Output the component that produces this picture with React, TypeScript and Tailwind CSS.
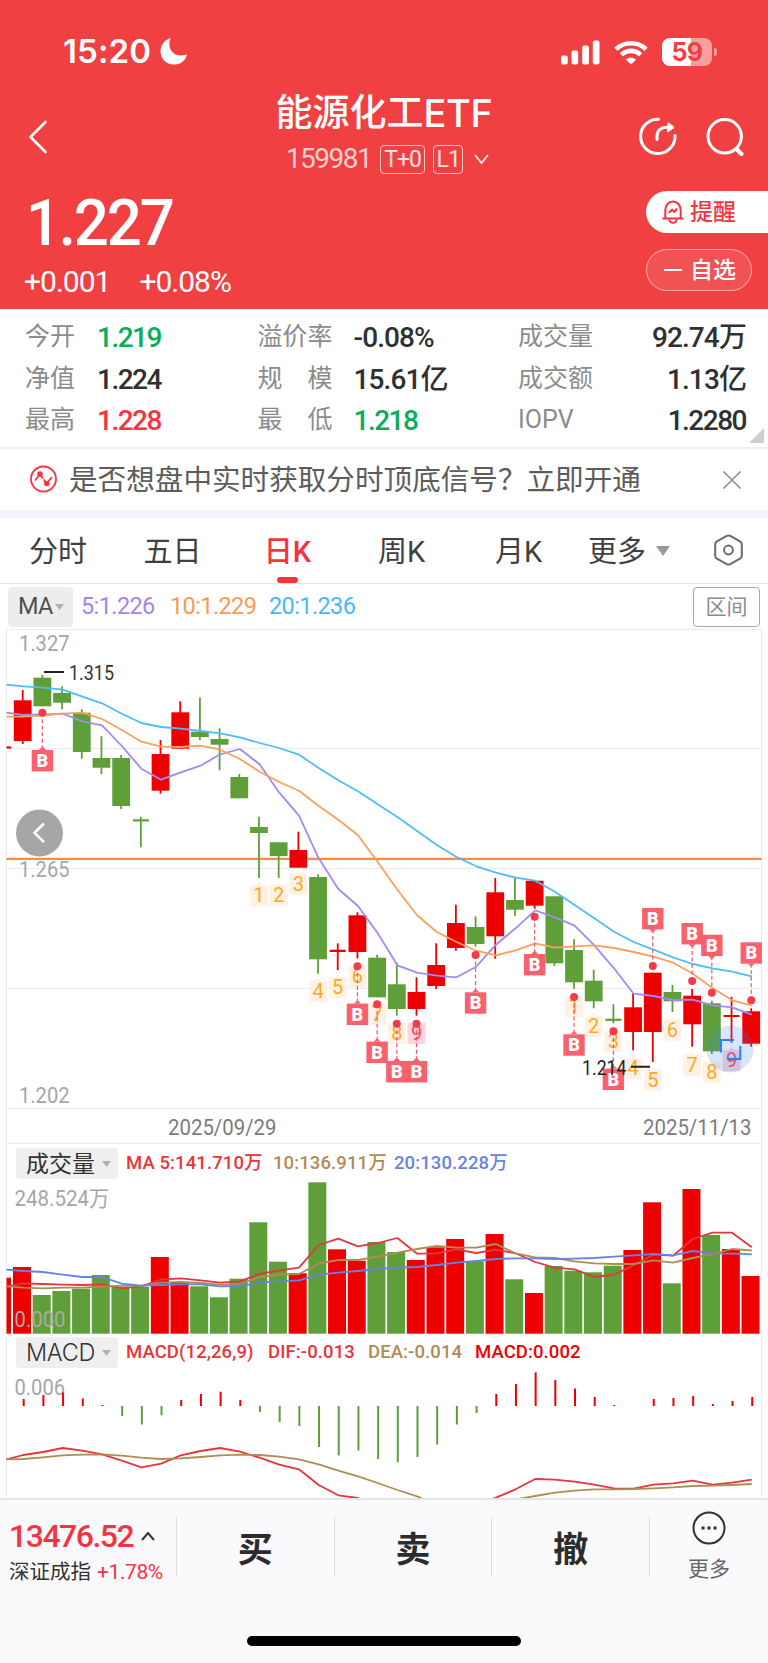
import clsx from "clsx";
import { ReactNode } from "react";

type Side = "r" | "g";

const RED = "#ee0000";
const GREEN = "#5f9f3a";
const STEP = 19.69;
const cx = (i: number) => 22.7 + i * STEP;

// side, body top, body bottom, wick high, wick low
const candles: [Side, number, number, number, number][] = [
  ["r", 700.3, 741, 690, 744],
  ["g", 677.7, 706.3, 675, 706.3],
  ["g", 693, 702.7, 686.3, 709.3],
  ["g", 712.7, 752, 709.3, 758.7],
  ["g", 758, 767.7, 736.3, 774],
  ["g", 758, 806, 755, 809],
  ["g", 819.3, 821.5, 816.7, 847.3],
  ["r", 754, 790.7, 740, 793.7],
  ["r", 712.3, 748.7, 701.3, 748.7],
  ["g", 731.7, 737, 697.7, 740],
  ["g", 739, 744.7, 728.3, 770.3],
  ["g", 777, 798.3, 774, 798.3],
  ["g", 827, 833, 816.7, 878],
  ["g", 842.3, 856, 842.3, 878],
  ["r", 850, 867.7, 831.7, 867.7],
  ["g", 877, 959.3, 874.3, 973.7],
  ["r", 949.7, 952, 943.3, 970],
  ["r", 915.3, 952, 912.3, 958.3],
  ["g", 957.7, 997.3, 954.7, 997.3],
  ["g", 984.3, 1009, 962.7, 1015.7],
  ["r", 992, 1009, 977.3, 1015.7],
  ["r", 965, 986, 943.3, 989],
  ["r", 923, 948, 904.7, 950.7],
  ["g", 927, 944, 916.3, 946.7],
  ["r", 892.3, 936.3, 878, 958.7],
  ["g", 900, 909.7, 878, 916],
  ["r", 880.7, 905.7, 880, 908.7],
  ["g", 896.3, 963.3, 896.3, 966],
  ["g", 950, 982.3, 939.3, 988.7],
  ["g", 980.7, 1001.3, 969.7, 1008.3],
  ["g", 1018.7, 1020.9, 1004.3, 1023.3],
  ["r", 1007.3, 1032, 993.3, 1050.3],
  ["r", 972.7, 1032, 972.7, 1062],
  ["g", 992, 1001.3, 985, 1012],
  ["r", 995.7, 1024.3, 989, 1046.7],
  ["g", 1003.3, 1051.3, 1000.7, 1054],
  ["r", 1015, 1017, 996.7, 1042.7],
  ["r", 1011.3, 1043.7, 1008.3, 1046.7],
];

const ma5 = [712.7, 715, 714.3, 713.7, 721.3, 725.3, 746, 768.7, 779.7, 772.3, 765.7, 754.3, 749, 764.3, 792.7, 815.7, 858.3, 889, 906, 933.3, 965.3, 972.7, 975.7, 977.3, 966.7, 944.7, 928.3, 910.3, 917.3, 925.7, 945.3, 968.3, 993.7, 996, 1000, 999.7, 1005.3, 1007.3, 1014.7];
const ma10 = [716.7, 716.7, 715.7, 713.7, 712.7, 719, 730, 741.7, 746.7, 747, 745.7, 749.7, 759, 771.7, 782, 790.7, 806, 819.7, 835.3, 862, 889.7, 915.3, 932, 942, 950.7, 955.3, 950.3, 943.3, 947.7, 946.3, 945.3, 948, 952, 956.7, 962.7, 973.7, 988, 1000.3, 1005.7];
const ma20 = [684.7, 686.3, 687.7, 689.7, 696.7, 703.3, 713.7, 723, 727, 728.7, 731, 733.3, 737.3, 743, 748, 754.7, 768, 780.3, 791.3, 804.3, 817, 831, 845, 857, 866.3, 872.7, 877.7, 880.7, 891.7, 905, 918.3, 931.7, 942, 949.7, 957.3, 964, 968.3, 971.7, 976.3];

// index, dot y, tag hangs below (1) or sits above (-1)
const signals: [number, number, 1 | -1][] = [
  [1, 712.7, 1],
  [17, 966.3, 1],
  [18, 1004.3, 1],
  [19, 1023.7, 1],
  [20, 1023.7, 1],
  [23, 955, 1],
  [26, 916.7, 1],
  [28, 997, 1],
  [30, 1031.3, 1],
  [32, 966, -1],
  [34, 981, -1],
  [35, 992.7, -1],
  [37, 1000.3, -1],
];

// index, tile top, digit
const counts: [number, number, number][] = [
  [12, 885, 1], [13, 885, 2], [14, 873.3, 3], [15, 980.7, 4], [16, 977, 5],
  [17, 966, 6], [18, 1003.5, 7], [19, 1022.7, 8], [20, 1022.7, 9],
  [28, 996, 1], [29, 1015.7, 2], [30, 1031, 3], [31, 1057.7, 4], [32, 1069.5, 5],
  [33, 1019.7, 6], [34, 1054.5, 7], [35, 1061.7, 8], [36, 1050, 9],
];

const volumes: [Side, number][] = [
  ["r", 1267], ["g", 1295], ["g", 1291], ["g", 1288.7], ["g", 1275], ["g", 1287], ["g", 1287],
  ["r", 1257], ["r", 1282], ["g", 1286.3], ["g", 1297.3], ["g", 1278.7], ["g", 1222.3], ["g", 1261.7],
  ["r", 1273.3], ["g", 1182.3], ["r", 1249.3], ["r", 1260.7], ["g", 1242], ["g", 1252], ["r", 1260],
  ["r", 1247.3], ["r", 1239], ["g", 1261.3], ["r", 1234], ["g", 1279.3], ["r", 1293], ["g", 1266],
  ["g", 1270.7], ["g", 1272.3], ["g", 1265.7], ["r", 1250], ["r", 1202.3], ["g", 1283.3], ["r", 1189],
  ["g", 1235], ["r", 1249], ["r", 1276],
];
const vol5 = [1286.7, 1283.3, 1284, 1284.7, 1285, 1284.3, 1288.3, 1286.3, 1279.7, 1278.3, 1280.3, 1282.7, 1281.3, 1274, 1270.3, 1267.7, 1245, 1238.7, 1246.3, 1243, 1238, 1253.7, 1253.3, 1249.3, 1253, 1249.7, 1253.3, 1262, 1267.7, 1269.3, 1277, 1274.7, 1265.3, 1254.7, 1255.7, 1239, 1232.7, 1232.7, 1247.3];
const vol10 = [1286.3, 1287.7, 1288.3, 1287.7, 1287.7, 1286.7, 1285.7, 1286, 1282.7, 1282, 1283, 1284.7, 1284, 1277, 1274.7, 1274, 1263.7, 1260, 1260, 1256.7, 1252.7, 1249, 1246, 1247.7, 1247.7, 1244, 1253.3, 1257.3, 1258, 1261.3, 1263.3, 1264, 1264, 1260.3, 1262.7, 1258, 1254, 1249, 1250.3];
const vol20 = [1269.7, 1271, 1272, 1274.7, 1277, 1277, 1283.7, 1285.7, 1285, 1284.3, 1284.3, 1286.3, 1286, 1282.7, 1281.3, 1280.3, 1274.7, 1272.7, 1271, 1269, 1267.7, 1267, 1265, 1262.7, 1261, 1259, 1258.3, 1258.3, 1259, 1258.7, 1258, 1256.7, 1255.3, 1254, 1255.3, 1251, 1253.3, 1253.7, 1254.3];

const macd = [1399, 1395, 1392.5, 1398.5, 1405, 1416, 1424.5, 1415.3, 1400, 1394, 1391.7, 1400, 1412, 1422, 1426, 1447, 1455.5, 1450.5, 1459, 1462.3, 1457, 1444.5, 1424.5, 1413, 1394, 1384, 1372.3, 1380, 1388.5, 1397, 1405, 1406, 1399, 1398, 1396, 1404, 1401, 1397];
const dif = [1459.3, 1455, 1452, 1448, 1450.7, 1454.3, 1460.7, 1467.3, 1463.7, 1455.3, 1451, 1448, 1451.7, 1457.7, 1464.7, 1469.3, 1485, 1495.3, 1498, 1510, 1520, 1524, 1520, 1512, 1505, 1497.7, 1489.3, 1479, 1479.7, 1481.7, 1484.7, 1488.3, 1488.7, 1484.7, 1483.3, 1480.7, 1484.7, 1482.7, 1479.7];
const dea = [1459.3, 1459, 1457.3, 1455.3, 1454.7, 1454.3, 1455.7, 1457.7, 1459, 1458.3, 1457, 1455.3, 1454.7, 1455, 1456.7, 1459.3, 1464.3, 1470.7, 1476.3, 1483, 1490, 1496.3, 1505, 1510, 1509, 1504, 1499.5, 1496, 1492.7, 1490.7, 1489.3, 1489.3, 1489, 1488.3, 1487.3, 1486, 1485.7, 1485, 1484];

// first value is the left edge of the frame, the rest sit on candle centres
const toPoints = (ys: number[]) =>
  ys.map((y, i) => `${i === 0 ? 6.5 : (cx(i - 1) + 0.6).toFixed(1)},${y}`).join(" ");

function Line({ ys, color }: { ys: number[]; color: string }) {
  return <polyline points={toPoints(ys)} fill="none" stroke={color} strokeWidth={1.8} strokeLinejoin="round" />;
}

function Label({ x, y, w, size, fill, children }: { x: number; y: number; w: number; size: number; fill: string; children: string }) {
  return (
    <text x={x} y={y} fontSize={size} fill={fill} textLength={w} lengthAdjust="spacingAndGlyphs">
      {children}
    </text>
  );
}

function Frame({ top, height }: { top: number; height: number }) {
  return <path d={`M6.5 ${top}v${height}M761.5 ${top}v${height}`} stroke="#ececec" strokeWidth={1} />;
}

function StatusBar() {
  return (
    <div className="flex h-[54px] items-center justify-between pl-[63px] pr-[51px]">
      <div className="flex items-center gap-[9px] pb-px">
        <span className="font-[Inter] text-[33px] font-semibold leading-none tracking-[0.1px]">15:20</span>
        <svg width="27" height="27" viewBox="0 0 27 27" className="fill-white">
          <path d="M10.5 0.6C9.6 2.6 9.2 4.6 9.3 6.6c.3 6.4 5.2 11 11.3 11 2 0 4-.3 5.4-1 .6-.2 1 .2.8.8C25 23 20 26.5 14 26.5 6 26.5 0.5 20.8.5 13.3.5 7.5 4.2 2.3 9.8.2c.6-.2 1 0 .7.4z" />
        </svg>
      </div>
      <div className="flex items-center">
        <svg width="39" height="25" viewBox="0 0 39 25" className="mr-[14px] fill-white">
          <rect x="0" y="15.5" width="6.7" height="9" rx="2" />
          <rect x="10.5" y="10.5" width="6.7" height="14" rx="2" />
          <rect x="21.2" y="5.5" width="6.7" height="19" rx="2" />
          <rect x="31.8" y="0.5" width="6.7" height="24" rx="2" />
        </svg>
        <svg width="34" height="25" viewBox="0 0 34 25" className="mr-[14px]" fill="none" stroke="white" strokeWidth="4.6">
          <path d="M2 9.3C10 1.3 24 1.3 32 9.3" />
          <path d="M7.4 14.8C12.8 9.6 21.2 9.6 26.6 14.8" />
          <path d="M17 24.5l-5-4.8c2.800-2.500 7.200-2.500 10 0z" fill="white" stroke="none" />
        </svg>
        <div className="flex h-7 w-[50px] items-center justify-center rounded-[8px] bg-linear-to-r from-white from-59% to-white/50 to-59%">
          <span className="font-[Inter] text-[25px] font-bold leading-none tracking-[-0.5px] text-[#f04042]">59</span>
        </div>
        <div className="ml-[2px] h-2 w-[3px] rounded-r-full bg-white/50" />
      </div>
    </div>
  );
}

function Header() {
  return (
    <header className="h-[309px] bg-[#f04042] pt-[25px] text-white">
      <StatusBar />
      <div className="grid h-[107px] grid-cols-[1fr_auto_1fr] items-center">
        <svg width="20" height="34" viewBox="0 0 20 34" className="ml-[28px] mt-[9px]" fill="none" stroke="white" strokeWidth="2.6" strokeLinecap="round" strokeLinejoin="round">
          <path d="M17.5 2L2.5 17l15 15" />
        </svg>
        <div className="flex flex-col items-center gap-[11px] pt-0.5">
          <h1 className="flex h-10 items-center text-[37px] font-medium leading-none">
            能源化工<span className="font-[Inter] text-[38px] font-medium tracking-[-0.3px]">ETF</span>
          </h1>
          <div className="flex h-[30px] items-center pl-[7px] leading-none">
            <span className="mr-[9px] text-[28px] tracking-[-1.5px] text-white/75">159981</span>
            <span className="mr-2 flex h-[29px] w-[45px] items-center justify-center rounded-[4px] border border-white/70 text-[23px] tracking-[-1px] text-white/85">T+0</span>
            <span className="mr-[11px] flex h-[29px] w-[30px] items-center justify-center rounded-[4px] border border-white/70 text-[23px] tracking-[-1px] text-white/85">L1</span>
            <svg width="15" height="11" viewBox="0 0 15 11" fill="none" stroke="white" strokeOpacity="0.85" strokeWidth="1.8">
              <path d="M1 1l6.5 8L14 1" />
            </svg>
          </div>
        </div>
        <div className="mr-[24px] mt-[8px] flex items-center justify-end gap-[29px]">
          <svg width="38" height="40" viewBox="0 0 38 40" fill="none" stroke="white" strokeWidth="3" strokeLinecap="round" strokeLinejoin="round">
            <path d="M19.5 2.2A17.2 17.2 0 1 0 36 18.5" />
            <path d="M18 22.5v-3c0-6 4-9.3 9.5-9.3h6.2" />
            <path d="M29.5 6.5l4.5 3.8-5 3.8z" fill="white" strokeWidth="2" />
          </svg>
          <svg width="38" height="40" viewBox="0 0 38 40" fill="none" stroke="white" strokeWidth="3" strokeLinecap="round">
            <circle cx="18.7" cy="19.3" r="16.7" />
            <path d="M30.5 32l5 5" strokeWidth="4" />
          </svg>
        </div>
      </div>
      <div className="flex justify-between pt-[5px]">
        <div className="leading-none">
          <div className="flex h-[64px] origin-left scale-x-95 items-center pl-[27px] text-[65px] font-medium tracking-[-2.2px]">1.227</div>
          <div className="mt-[11px] flex h-[32px] items-center gap-[29px] pl-[24px] text-[30px] tracking-[-1px]">
            <span>+0.001</span>
            <span>+0.08%</span>
          </div>
        </div>
        <div className="flex w-[122px] flex-col gap-4 text-[23px] font-medium leading-none">
          <button className="flex h-[42px] items-center rounded-l-full bg-white pl-4 text-[#f7333f]">
            <svg width="22" height="24" viewBox="0 0 22 24" className="mr-[6px]" fill="none" stroke="currentColor" strokeWidth="2" strokeLinecap="round" strokeLinejoin="round">
              <path d="M1.2 18.500h19.600M3.300 18.200V10a7.700 8.500 0 0 1 15.400 0v8.200M7.500 20.500c1 3 6 3 7 0M7.500 12.300l2.700-2.800 2 2.500 2.600-3" />
            </svg>
            提醒
          </button>
          <button className="flex h-[42px] w-[106px] items-center rounded-full border border-white/50 bg-white/10 pl-[17px]">
            <span className="mr-[8px] h-[2px] w-[18px] bg-white" />
            自选
          </button>
        </div>
      </div>
    </header>
  );
}

function Stat({ label, value, tone, spread }: { label: string; value: string; tone?: "up" | "down"; spread?: boolean }) {
  return (
    <div className="flex h-[41.5px] items-center">
      <span className={clsx("pt-0.5 text-[25px] text-[#8c8c8c]", spread && "flex w-[75px] justify-between")}>
        {spread ? label.split("").map((c) => <span key={c}>{c}</span>) : label}
      </span>
      <span
        className={clsx(
          "pt-[5px] text-[28px] font-medium",
          value.startsWith("1.2") ? "tracking-[-1.5px]" : "tracking-[-0.9px]",
          tone === "up" ? "text-[#f7333f]" : tone === "down" ? "text-[#0aad5b]" : "text-[#303030]"
        )}
      >
        {value}
      </span>
    </div>
  );
}

function Quote() {
  return (
    <section className="relative flex h-[140px] border-b-2 border-[#efefef] pt-[6px] leading-none">
      <div className="w-[233px] pl-[25px] [&>div]:gap-[22px]">
        <Stat label="今开" value="1.219" tone="down" />
        <Stat label="净值" value="1.224" />
        <Stat label="最高" value="1.228" tone="up" />
      </div>
      <div className="w-[260px] pl-[24.5px] [&>div]:gap-[21px]">
        <Stat label="溢价率" value="-0.08%" />
        <Stat label="规模" value="15.61亿" spread />
        <Stat label="最低" value="1.218" tone="down" spread />
      </div>
      <div className="w-[253px] pl-[25px] [&>div]:justify-between">
        <Stat label="成交量" value="92.74万" />
        <Stat label="成交额" value="1.13亿" />
        <Stat label="IOPV" value="1.2280" />
      </div>
      <svg width="15" height="15" viewBox="0 0 15 15" className="absolute bottom-1 right-1 fill-[#cfcfcf]">
        <path d="M15 0v15H0z" />
      </svg>
    </section>
  );
}

function Banner() {
  return (
    <section className="flex h-[69px] items-center border-b-8 border-[#f1f4f9] pl-[30px] pr-[27px]">
      <svg width="27" height="28" viewBox="0 0 27 28" className="-mt-px" fill="none" stroke="#f7333f" strokeWidth="1.8">
        <circle cx="13.5" cy="14" r="12.5" />
        <path d="M5 15.5l5-6.5 6.5 9.5 5.5-6.5" strokeDasharray="6 1.5" />
        <circle cx="10" cy="9" r="1.9" fill="#f7333f" />
        <circle cx="16.8" cy="18.5" r="1.9" fill="#f7333f" />
      </svg>
      <p className="ml-[12px] flex-1 whitespace-nowrap pt-0.5 text-[28.6px] leading-none text-[#5c5c5c]">是否想盘中实时获取分时顶底信号？立即开通</p>
      <svg width="18" height="18" viewBox="0 0 18 18" stroke="#8a8a8a" strokeWidth="1.5">
        <path d="M0.5 0.5l17 17M17.5 0.5L0.5 17.5" />
      </svg>
    </section>
  );
}

const tabs = [
  { name: "分时", className: "ml-[29px] w-[58px]" },
  { name: "五日", className: "ml-[57px] w-[57px]" },
  { name: "日K", className: "ml-[62px] w-[49px]" },
  { name: "周K", className: "ml-[65px] w-[49px]" },
  { name: "月K", className: "ml-[68px] w-[49px]" },
  { name: "更多", className: "ml-[45px] w-[58px]" },
];

function Tabs() {
  return (
    <nav className="flex h-[66px] items-center border-b border-[#e6e6e6]">
      {tabs.map((t) => (
        <div key={t.name} className={clsx("relative flex h-full items-center justify-center whitespace-nowrap pt-1 text-[29px] leading-none", t.name === "日K" ? "font-medium text-[#f7333f]" : "text-[#404040]", t.className)}>
          {t.name}
          {t.name === "日K" && <span className="absolute bottom-0 left-[14px] h-1.5 w-[21px] rounded-full bg-[#f7333f]" />}
        </div>
      ))}
      <svg width="14" height="10" viewBox="0 0 14 10" className="ml-[10px] mt-px fill-[#999]">
        <path d="M0 0h14L7 10z" />
      </svg>
      <svg width="29" height="32" viewBox="0 0 29 32" className="-mt-px ml-[44px]" fill="none" stroke="#6a6a6a" strokeWidth="2" strokeLinejoin="round">
        <path d="M12.7 1.9q1.800-1 3.600 0l9.700 5.400q1.800 1 1.800 3v11.400q0 2-1.800 3l-9.700 5.400q-1.800 1-3.600 0L3 24.700q-1.800-1-1.800-3V10.300q0-2 1.800-3z" />
        <circle cx="14.5" cy="16" r="4.4" />
      </svg>
    </nav>
  );
}

function Caret({ className }: { className?: string }) {
  return (
    <svg width="9" height="6" viewBox="0 0 9 6" className={clsx("fill-[#b0b0b0]", className)}>
      <path d="M0 0h9L4.5 6z" />
    </svg>
  );
}

function MaBar() {
  return (
    <div className="flex h-[45px] items-center px-2 text-[23.5px] leading-none tracking-[-0.6px]">
      <button className="flex h-10 w-[65px] items-center rounded-[4px] bg-[#ededed] pl-[10px] tracking-[-0.7px] text-[#505050]">
        MA
        <Caret className="ml-0.5" />
      </button>
      <span className="ml-[8px] w-[89px] text-[#a684f0]">5:1.226</span>
      <span className="w-[99px] text-[#fb9a55]">10:1.229</span>
      <span className="flex-1 text-[#49b8fb]">20:1.236</span>
      <button className="flex h-10 w-[67px] items-center justify-center rounded-[4px] border border-[#a8a8a8] pt-0.5 text-[21px] tracking-normal text-[#8c8c8c]">区间</button>
    </div>
  );
}

function KChart() {
  return (
    <svg width="768" height="515" viewBox="0 629 768 515" className="block">
      <path d="M6.5 629.5h755M6.5 748.5h755M6.5 868.5h755M6.5 988.5h755M6.5 1108.5h755M6.5 1143.5h755" stroke="#ececec" />
      <Frame top={629} height={515} />
      <path d="M6.5 858.8h755" stroke="#fd8b41" strokeWidth={2.2} />
      <rect x={6.5} y={746.4} width={4.7} height={2.2} fill={RED} />
      {candles.map(([side, top, bottom, high, low], i) => {
        const thin = bottom - top < 3;
        const w = thin ? 16 : 17.8;
        const color = side === "r" ? RED : GREEN;
        return (
          <g key={i} fill={color}>
            <rect x={cx(i) - 0.9} y={high} width={1.8} height={low - high} />
            <rect x={cx(i) - w / 2} y={top} width={w} height={bottom - top} />
          </g>
        );
      })}
      {counts.map(([i, y, n]) => (
        <g key={i}>
          <path
            d={`M${cx(i) - 9} ${y}h6l3-3 3 3h6v21.3h-18z`}
            fill={n === 9 ? "#fbccd2" : "#fff0df"}
            fillOpacity={0.85}
          />
          <text x={cx(i)} y={y + 17.3} fontSize={20} textAnchor="middle" fill={n === 9 ? "#ee4c60" : "#ffa726"}>
            {n}
          </text>
        </g>
      ))}
      <Line ys={ma5} color="#a38af2" />
      <Line ys={ma10} color="#fda05c" />
      <Line ys={ma20} color="#4dbdfc" />
      {signals.map(([i, y, dir]) => {
        const x = cx(i);
        const top = dir === 1 ? y + 37.3 : y - 58;
        const edge = dir === 1 ? top : top + 21.3;
        return (
          <g key={i}>
            <path d={`M${x} ${y}V${edge - dir * 3}`} stroke="#f0556a" strokeWidth={1.2} strokeDasharray="4 2.5" />
            <circle cx={x} cy={y} r={4} fill="#f43a4b" />
            <g fill="#fa5c68" fillOpacity={0.97}>
              <rect x={x - 10.7} y={top} width={21.4} height={21.4} />
              <path d={`M${x - 3.5} ${edge}L${x} ${edge - dir * 3.5}L${x + 3.5} ${edge}z`} />
            </g>
            <text x={x} y={top + 17.1} fontSize={18} fontWeight={900} textAnchor="middle" fill="#fff">
              B
            </text>
          </g>
        );
      })}
      <circle cx={730} cy={1049} r={23.5} fill="#3b82f6" fillOpacity={0.2} />
      <path d="M721 1052.5v-12.500h13M740.300 1046v13h-13" fill="none" stroke="#2a80ff" strokeWidth={2} />
      <path d="M44 672h20M631 1066.800h19" stroke="#222" strokeWidth={2} />
      <Label x={69} y={679.5} w={45} size={20} fill="#333">1.315</Label>
      <Label x={582} y={1075} w={44.5} size={20} fill="#222">1.214</Label>
      <Label x={19} y={651} w={50.5} size={22} fill="#a6a6a6">1.327</Label>
      <Label x={19} y={877} w={50.5} size={22} fill="#a6a6a6">1.265</Label>
      <Label x={19} y={1103.3} w={50.5} size={22} fill="#a6a6a6">1.202</Label>
      <Label x={168} y={1135} w={108.5} size={22} fill="#7c7c7c">2025/09/29</Label>
      <Label x={643} y={1135} w={108.5} size={22} fill="#7c7c7c">2025/11/13</Label>
      <circle cx={39.5} cy={833} r={23.5} fill="#a6a6a6" />
      <path d="M44 823.5l-9.500 9.300 9.500 9.300" fill="none" stroke="#fff" strokeWidth={2.5} />
    </svg>
  );
}

function IndicatorBar({ name, className, children }: { name: ReactNode; className: string; children: ReactNode }) {
  return (
    <div className={clsx("mx-[6px] flex items-center border-x border-[#ececec] pl-[9px] leading-none", className)}>
      <button className="mr-[8px] flex h-[31px] w-[102px] items-center justify-between rounded-[4px] bg-[#efefef] pl-[10px] pr-[7px] text-[#333]">
        {name}
        <Caret />
      </button>
      <div className="flex whitespace-nowrap text-[18.5px] font-medium tracking-[0.1px]">{children}</div>
    </div>
  );
}

function VolumeChart() {
  return (
    <svg width="768" height="156" viewBox="0 1180 768 156" className="block">
      <Frame top={1180} height={156} />
      <rect x={6.5} y={1277.7} width={4.5} height={56} fill={RED} />
      {volumes.map(([side, top], i) => (
        <rect key={i} x={cx(i) - 9.7} y={top} width={18} height={1333.7 - top} fill={side === "r" ? RED : GREEN} />
      ))}
      <Line ys={vol5} color="#e0383c" />
      <Line ys={vol10} color="#b08c55" />
      <Line ys={vol20} color="#6683e0" />
      <Label x={14.5} y={1206} w={95} size={22} fill="#a6a6a6">248.524万</Label>
      <Label x={14.5} y={1326.7} w={51} size={22} fill="#aaa">0.000</Label>
    </svg>
  );
}

function MacdChart() {
  return (
    <svg width="768" height="128" viewBox="0 1370 768 128" className="block">
      <Frame top={1370} height={128} />
      <Label x={14.5} y={1394.7} w={50.5} size={22} fill="#a6a6a6">0.006</Label>
      {macd.map((y, i) => (
        <rect key={i} x={cx(i)} y={Math.min(y, 1406)} width={2} height={Math.abs(y - 1406)} fill={y < 1406 ? RED : GREEN} />
      ))}
      <Line ys={dif} color="#e8343a" />
      <Line ys={dea} color="#b08c55" />
    </svg>
  );
}

function Footer() {
  return (
    <footer className="h-[165px] border-t-2 border-[#e4e4e6] bg-[#fafafc] leading-none">
      <div className="flex h-[94px] items-center">
        <div className="h-[62px] w-[176px] whitespace-nowrap pl-[9px]">
          <div className="flex h-[38px] items-center pt-0.5 text-[32px] font-medium tracking-[-1.5px] text-[#f7333f]">
            13476.52
            <svg width="14" height="10" viewBox="0 0 14 10" className="ml-[8px]" fill="none" stroke="#333" strokeWidth="2">
              <path d="M1 9l6-7 6 7" />
            </svg>
          </div>
          <div className="mt-[6px] flex h-6 items-center text-[20.5px] text-[#333]">
            深证成指
            <span className="ml-[6px] text-[21px] tracking-[-0.4px] text-[#f7333f]">+1.78%</span>
          </div>
        </div>
        {["买", "卖", "撤"].map((t) => (
          <button key={t} className="flex h-[60px] w-[157.7px] items-center justify-center border-l border-[#dcdcdc] pt-1.5 text-[35px] font-bold text-[#2c2c2c]">
            {t}
          </button>
        ))}
        <div className="flex h-[60px] flex-1 items-center justify-center border-l border-[#dcdcdc]">
          <div className="-mt-1 flex flex-col items-center gap-3.5 text-[21px] text-[#666]">
            <svg width="34" height="34" viewBox="0 0 34 34" fill="none" stroke="#303030" strokeWidth="2">
              <circle cx="17" cy="17" r="15.5" />
              <path d="M9.5 17h3M15.500 17h3M21.500 17h3" strokeWidth="3" />
            </svg>
            更多
          </div>
        </div>
      </div>
      <div className="mx-auto mt-[42px] h-2.5 w-[274px] rounded-full bg-black" />
    </footer>
  );
}

export default function App() {
  return (
    <main className="h-[1663px] w-[768px] overflow-hidden bg-white font-[Roboto,'Noto_Sans_CJK_SC',sans-serif]">
      <Header />
      <Quote />
      <Banner />
      <Tabs />
      <MaBar />
      <KChart />
      <IndicatorBar name={<span className="pt-0.5 text-[23px]">成交量</span>} className="h-9 pt-[3px]">
        <span className="w-[147px] text-[#e8343a]">MA 5:141.710万</span>
        <span className="w-[121px] text-[#b08c55]">10:136.911万</span>
        <span className="text-[#6683e0]">20:130.228万</span>
      </IndicatorBar>
      <VolumeChart />
      <IndicatorBar name={<span className="font-[Inter] text-[23.5px] font-light tracking-[-0.3px]">MACD</span>} className="h-[34px] pb-px">
        <span className="w-[142px] text-[#e8343a]">MACD(12,26,9)</span>
        <span className="w-[100px] text-[#e8343a]">DIF:-0.013</span>
        <span className="w-[107px] text-[#b08c55]">DEA:-0.014</span>
        <span className="text-[#ee0000]">MACD:0.002</span>
      </IndicatorBar>
      <MacdChart />
      <Footer />
    </main>
  );
}
